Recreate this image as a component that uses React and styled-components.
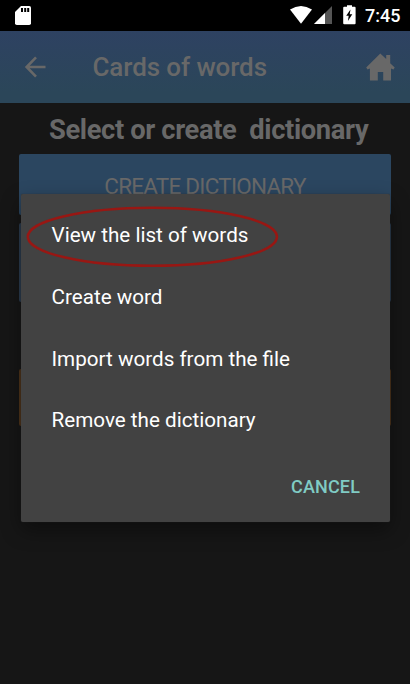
import React from "react";
import styled, { createGlobalStyle } from "styled-components";

const GlobalStyle = createGlobalStyle`
  * { box-sizing: border-box; }
  body { margin: 0; background: #161616; font-family: Roboto, sans-serif; }
  button { font-family: inherit; border: 0; margin: 0; padding: 0; cursor: pointer; }
`;

const Screen = styled.div`
  position: relative;
  width: 410px;
  height: 684px;
  overflow: hidden;
  background: #161616;
`;

const StatusBar = styled.div`
  height: 31px;
  padding: 0 9px 0 15px;
  display: flex;
  align-items: center;
  background: #000;
  color: #fff;
  svg { display: block; flex: none; }
`;

const Spacer = styled.div`
  flex: 1;
`;

const Clock = styled.time`
  width: 36px;
  margin-left: 9px;
  font-size: 18px;
  font-weight: 500;
  line-height: 31px;
  white-space: nowrap;
`;

const AppBar = styled.header`
  height: 72px;
  padding: 0 14px 0 24px;
  display: flex;
  align-items: center;
  background: linear-gradient(#2e4262, #2b4659 85%);
  color: #686868;
  svg { display: block; }
`;

const IconButton = styled.button`
  background: none;
  color: inherit;
`;

const Title = styled.h1`
  flex: 1;
  margin: 0 0 1px 45.5px;
  font-size: 26px;
  font-weight: 500;
  line-height: 32px;
  letter-spacing: -0.1px;
  white-space: nowrap;
`;

const Content = styled.main`
  padding: 0 19px;
`;

const Heading = styled.h2`
  height: 51px;
  margin: 0 0 0 30px;
  font-size: 27.3px;
  font-weight: 700;
  line-height: 55px;
  letter-spacing: -0.36px;
  white-space: pre;
  color: #686868;
`;

const Tile = styled.button`
  display: block;
  width: 100%;
  height: ${(p) => p.$height}px;
  margin-top: ${(p) => p.$gap || 0}px;
  padding-top: 1px;
  border-radius: 2px;
  background: ${(p) => p.$color};
  color: #686868;
  font-size: 22.5px;
  line-height: 62px;
  letter-spacing: -0.77px;
  white-space: nowrap;
`;

const Dialog = styled.section`
  position: absolute;
  left: 21px;
  top: 194px;
  width: 369px;
  height: 328px;
  padding-top: 11px;
  display: flex;
  flex-direction: column;
  border-radius: 2px;
  background: #424242;
  box-shadow: 0 0 1px #303030, 0 8px 20px rgba(0, 0, 0, 0.4);
`;

const Option = styled.button`
  height: 61.7px;
  flex: none;
  padding-left: 30.5px;
  background: none;
  color: #fff;
  text-align: left;
  font-size: 20.65px;
  line-height: 61px;
  white-space: nowrap;
`;

const Cancel = styled.button`
  align-self: flex-end;
  margin: 17px 30px 0 0;
  background: none;
  color: #80cbc4;
  font-size: 18px;
  font-weight: 500;
  line-height: 36px;
  letter-spacing: 0.15px;
`;

const Highlight = styled.svg`
  position: absolute;
  left: 25px;
  top: 205px;
  pointer-events: none;
`;

export default function App() {
  return (
    <Screen>
      <GlobalStyle />
      <StatusBar>
        <svg width="16" height="19" viewBox="0 0 16 19">
          <path d="M6 0h8.2Q16 0 16 1.8v15.4Q16 19 14.200 19H1.800Q0 19 0 17.200V6z" fill="#fff" />
          <path d="M6 2h2v4H6zM9.200 2h2v4h-2zM12.200 2h2v4h-2z" fill="#000" />
        </svg>
        <Spacer />
        <svg width="71" height="31" viewBox="285 0 71 31">
          <path d="M290 9.500Q301 2.500 312 9.500L301 23.800z" fill="#fff" />
          <path d="M332 6v18h-18z" fill="#555" />
          <path d="M325 13v11h-11z" fill="#fff" />
          <path d="M347 5.200h5v1.600h2.600q1 0 1 1v15.400q0 1-1 1H344.200q-1 0-1-1V7.800q0-1 1-1H347z" fill="#fff" />
          <path d="M350.500 9.500l-4.300 6.300h2.500l-.8 5.200 4.400-6.700h-2.600z" fill="#000" />
        </svg>
        <Clock>7:45</Clock>
      </StatusBar>
      <AppBar>
        <IconButton aria-label="Back">
          <svg width="23" height="22" viewBox="0 0 23 22" fill="none" stroke="currentColor" strokeWidth="2.600">
            <path d="M12 1.300L2.600 11l9.400 9.700M2.600 11H21.500" />
          </svg>
        </IconButton>
        <Title>Cards of words</Title>
        <IconButton aria-label="Home">
          <svg width="30" height="28" viewBox="0 0 30 28" fill="currentColor">
            <path d="M14.300 0.500L20.200 6.100V2H24.200v8.200L28.700 14.500 27.500 16.500 25 15.500V27.500H17.200V19H11.800V27.500H3.900V15.500L1.500 16.500 0.200 14.500z" />
          </svg>
        </IconButton>
      </AppBar>
      <Content>
        <Heading>Select or create  dictionary</Heading>
        <Tile $height={61} $color="#2b4660">CREATE DICTIONARY</Tile>
        <Tile $height={79} $gap={8} $color="#2b3c50" />
        <Tile $height={57} $gap={67} $color="#50351a" />
      </Content>
      <Dialog role="dialog">
        <Option>View the list of words</Option>
        <Option>Create word</Option>
        <Option>Import words from the file</Option>
        <Option>Remove the dictionary</Option>
        <Cancel>CANCEL</Cancel>
      </Dialog>
      <Highlight width="256" height="66" viewBox="0 0 256 66">
        <ellipse cx="127.400" cy="31.800" rx="124.600" ry="29" fill="none" stroke="#981713" strokeWidth="2.500" />
      </Highlight>
    </Screen>
  );
}
